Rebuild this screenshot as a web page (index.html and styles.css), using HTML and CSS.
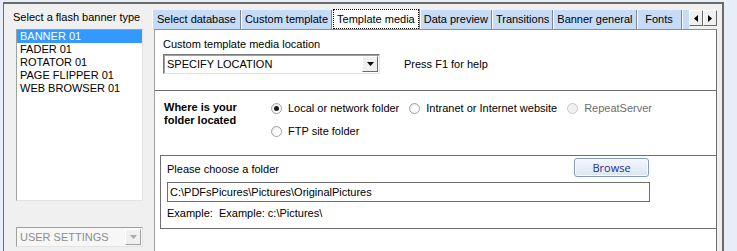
FILE: index.html
```html
<!DOCTYPE html>
<html lang="en">
<head>
    <meta charset="UTF-8">
    <title>Flash banner settings</title>
    <link rel="stylesheet" href="styles.css">
</head>
<body>
    <div class="window">
        <aside class="type-panel">
            <div class="type-label">Select a flash banner type</div>
            <ul class="type-list">
                <li class="selected">BANNER 01</li>
                <li>FADER 01</li>
                <li>ROTATOR 01</li>
                <li>PAGE FLIPPER 01</li>
                <li>WEB BROWSER 01</li>
            </ul>
            <div class="combo combo-disabled">
                <span class="combo-text">USER SETTINGS</span>
                <span class="combo-btn">
                    <svg width="7" height="4" viewBox="0 0 7 4"><path d="M0 0h7L3.5 4z" fill="#a8a8a8"/></svg>
                </span>
            </div>
        </aside>

        <section class="tabs">
            <div class="tab-strip">
                <div class="tab-list">
                    <span class="tab">Select database</span>
                    <span class="tab">Custom template</span>
                    <span class="tab tab-active"><span class="tab-focus">Template media</span></span>
                    <span class="tab">Data preview</span>
                    <span class="tab">Transitions</span>
                    <span class="tab">Banner general</span>
                    <span class="tab tab-wide">Fonts</span>
                    <span class="tab tab-wide"></span>
                </div>
                <div class="tab-arrows">
                    <span class="arrow-btn">
                        <svg width="4" height="7" viewBox="0 0 4 7"><path d="M4 0v7L0 3.5z" fill="#000"/></svg>
                    </span>
                    <span class="arrow-btn">
                        <svg width="4" height="7" viewBox="0 0 4 7"><path d="M0 0v7l4-3.5z" fill="#000"/></svg>
                    </span>
                </div>
            </div>

            <div class="tab-page">
                <div class="media-top">
                    <div>Custom template media location</div>
                    <div class="media-row">
                        <div class="combo combo-location">
                            <span class="combo-text">SPECIFY LOCATION</span>
                            <span class="combo-btn">
                                <svg width="7" height="4" viewBox="0 0 7 4"><path d="M0 0h7L3.5 4z" fill="#000"/></svg>
                            </span>
                        </div>
                        <span class="help-text">Press F1 for help</span>
                    </div>
                </div>

                <div class="location-row">
                    <div class="location-label">Where is your<br>folder located</div>
                    <div class="radio-group">
                        <div class="radio-line">
                            <label class="radio"><span class="radio-mark checked"></span>Local or network folder</label>
                            <label class="radio"><span class="radio-mark"></span>Intranet or Internet website</label>
                            <label class="radio radio-disabled"><span class="radio-mark"></span>RepeatServer</label>
                        </div>
                        <div class="radio-line">
                            <label class="radio"><span class="radio-mark"></span>FTP site folder</label>
                        </div>
                    </div>
                </div>

                <div class="folder-box">
                    <div class="folder-head">
                        <span class="folder-label">Please choose a folder</span>
                        <button class="browse-btn">Browse</button>
                    </div>
                    <div class="path-box">C:\PDFsPicures\Pictures\OriginalPictures</div>
                    <div class="example">Example:  Example: c:\Pictures\</div>
                </div>
            </div>
        </section>
    </div>
</body>
</html>
```

FILE: styles.css
```css
html, body {
    margin: 0;
    padding: 0;
    height: 100%;
    overflow: hidden;
}
body {
    background-color: #e8eef7;
    font-family: "Liberation Sans", Arial, sans-serif;
    font-size: 11px;
    color: #000;
}
.window {
    margin: 2px 13px 0 3px;
    height: 249px;
    box-sizing: border-box;
    border-top: 2px solid #6b6b6b;
    border-right: 2px solid #6b6b6b;
    border-left: 1px solid #6b6b6b;
    background-color: #f0f0f0;
    display: flex;
}

/* left column */
.type-panel {
    width: 148px;
    flex-shrink: 0;
    padding: 6px 0 0 12px;
    box-sizing: border-box;
}
.type-label {
    margin-left: -3px;
    line-height: 14px;
    white-space: nowrap;
}
.type-list {
    list-style: none;
    margin: 5px 0 0 0;
    padding: 0;
    width: 127px;
    height: 172px;
    box-sizing: border-box;
    background: white;
    border: 1px solid;
    border-color: #a0a0a0 #e3e3e3 #e3e3e3 #a0a0a0;
}
.type-list li {
    line-height: 13px;
    padding-left: 3px;
}
.type-list li.selected {
    background-color: #3399ff;
    color: white;
}

/* combo boxes */
.combo {
    display: flex;
    align-items: center;
    height: 20px;
    box-sizing: border-box;
    background: white;
    border: 1px solid;
    border-color: #7a7a7a #e3e3e3 #e3e3e3 #7a7a7a;
    box-shadow: inset 1px 1px 0 #a0a0a0;
}
.combo-text {
    flex: 1;
    padding-left: 3px;
    white-space: nowrap;
}
.combo-btn {
    width: 16px;
    height: 16px;
    margin-right: 1px;
    box-sizing: border-box;
    display: flex;
    align-items: center;
    justify-content: center;
    background-color: #f0f0f0;
    border: 1px solid;
    border-color: #fff #696969 #696969 #fff;
}
.combo-disabled {
    margin-top: 26px;
    width: 127px;
    background-color: #f7f7f7;
    color: #8d8d8d;
    border-color: #a0a0a0 #e3e3e3 #e3e3e3 #a0a0a0;
    box-shadow: none;
}
.combo-disabled .combo-btn {
    border-color: #fff #a0a0a0 #a0a0a0 #fff;
}
.combo-location {
    width: 217px;
}

/* tab control */
.tabs {
    flex: 1;
    display: flex;
    flex-direction: column;
    min-width: 0;
}
.tab-strip {
    display: flex;
    align-items: flex-end;
    height: 20px;
    margin: 5px 5px 0 0;
}
.tab-list {
    flex: 1;
    display: flex;
    align-items: flex-end;
    overflow: hidden;
    height: 20px;
}
.tab {
    flex-shrink: 0;
    height: 19px;
    line-height: 19px;
    padding: 0 3px;
    box-sizing: border-box;
    background-color: #c6dbf6;
    border-left: 1px solid #fff;
    border-right: 1px solid #7f8793;
    white-space: nowrap;
}
.tab:first-child {
    padding: 0 4px;
}
.tab-wide {
    min-width: 45px;
    text-align: center;
}
.tab-active {
    height: 20px;
    line-height: 18px;
    padding: 0;
    background-color: white;
}
.tab-focus {
    display: block;
    padding: 0 3px;
    border: 1px dotted #000;
}
.tab-arrows {
    display: flex;
    align-self: center;
    margin-bottom: 2px;
}
.arrow-btn {
    width: 14px;
    height: 16px;
    box-sizing: border-box;
    display: flex;
    align-items: center;
    justify-content: center;
    background-color: #f0f0f0;
    border: 1px solid;
    border-color: #fff #696969 #696969 #fff;
}

.tab-page {
    flex: 1;
    margin: 0 5px 0 2px;
    background: white;
    border-top: 1px solid #8c8e94;
    border-left: 1px solid #a0a0a0;
    border-right: 1px solid #6e6e6e;
}

.media-top {
    padding: 7px 0 16px 8px;
    line-height: 14px;
    border-bottom: 1px solid #6e6e6e;
}
.media-row {
    display: flex;
    align-items: center;
    gap: 24px;
    margin-top: 3px;
}

.location-row {
    display: flex;
    padding: 10px 0 17px 9px;
}
.location-label {
    width: 107px;
    font-weight: bold;
    line-height: 13px;
}
.radio-group {
    display: flex;
    flex-direction: column;
    gap: 9px;
}
.radio-line {
    display: flex;
    gap: 10px;
}
.radio {
    display: flex;
    align-items: center;
    gap: 6px;
    height: 14px;
    white-space: nowrap;
}
.radio-mark {
    position: relative;
    width: 11px;
    height: 11px;
    box-sizing: border-box;
    border-radius: 50%;
    border: 1px solid #a2a2a2;
    background: radial-gradient(circle at 65% 65%, #fff 35%, #dedede 100%);
}
.radio-mark.checked::after {
    content: "";
    position: absolute;
    left: 2px;
    top: 2px;
    width: 5px;
    height: 5px;
    border-radius: 50%;
    background-color: #1a1a1a;
}
.radio-disabled {
    color: #6d6d6d;
}
.radio-disabled .radio-mark {
    border-color: #c8c8c8;
    background: #f2f2f2;
}

.folder-box {
    margin-left: 5px;
    padding: 2px 0 8px 6px;
    border: 1px solid #6e6e6e;
    border-right: none;
}
.folder-head {
    display: flex;
    justify-content: space-between;
    align-items: flex-start;
    width: 482px;
}
.folder-label {
    margin-top: 4px;
    line-height: 14px;
}
.browse-btn {
    width: 75px;
    height: 19px;
    padding: 0;
    font-family: "Open Sans", "DejaVu Sans", sans-serif;
    font-size: 11px;
    color: #1f2f86;
    background: linear-gradient(#f3f7fc, #dbe6f4);
    border: 1px solid #7e9bc6;
    border-radius: 3px;
    box-shadow: inset 0 0 0 1px #fbfdff;
}
.path-box {
    width: 483px;
    height: 20px;
    margin-top: 5px;
    box-sizing: border-box;
    padding-left: 2px;
    line-height: 18px;
    border: 1px solid #707070;
    white-space: nowrap;
}
.example {
    margin-top: 4px;
    line-height: 14px;
    white-space: pre;
}
```
